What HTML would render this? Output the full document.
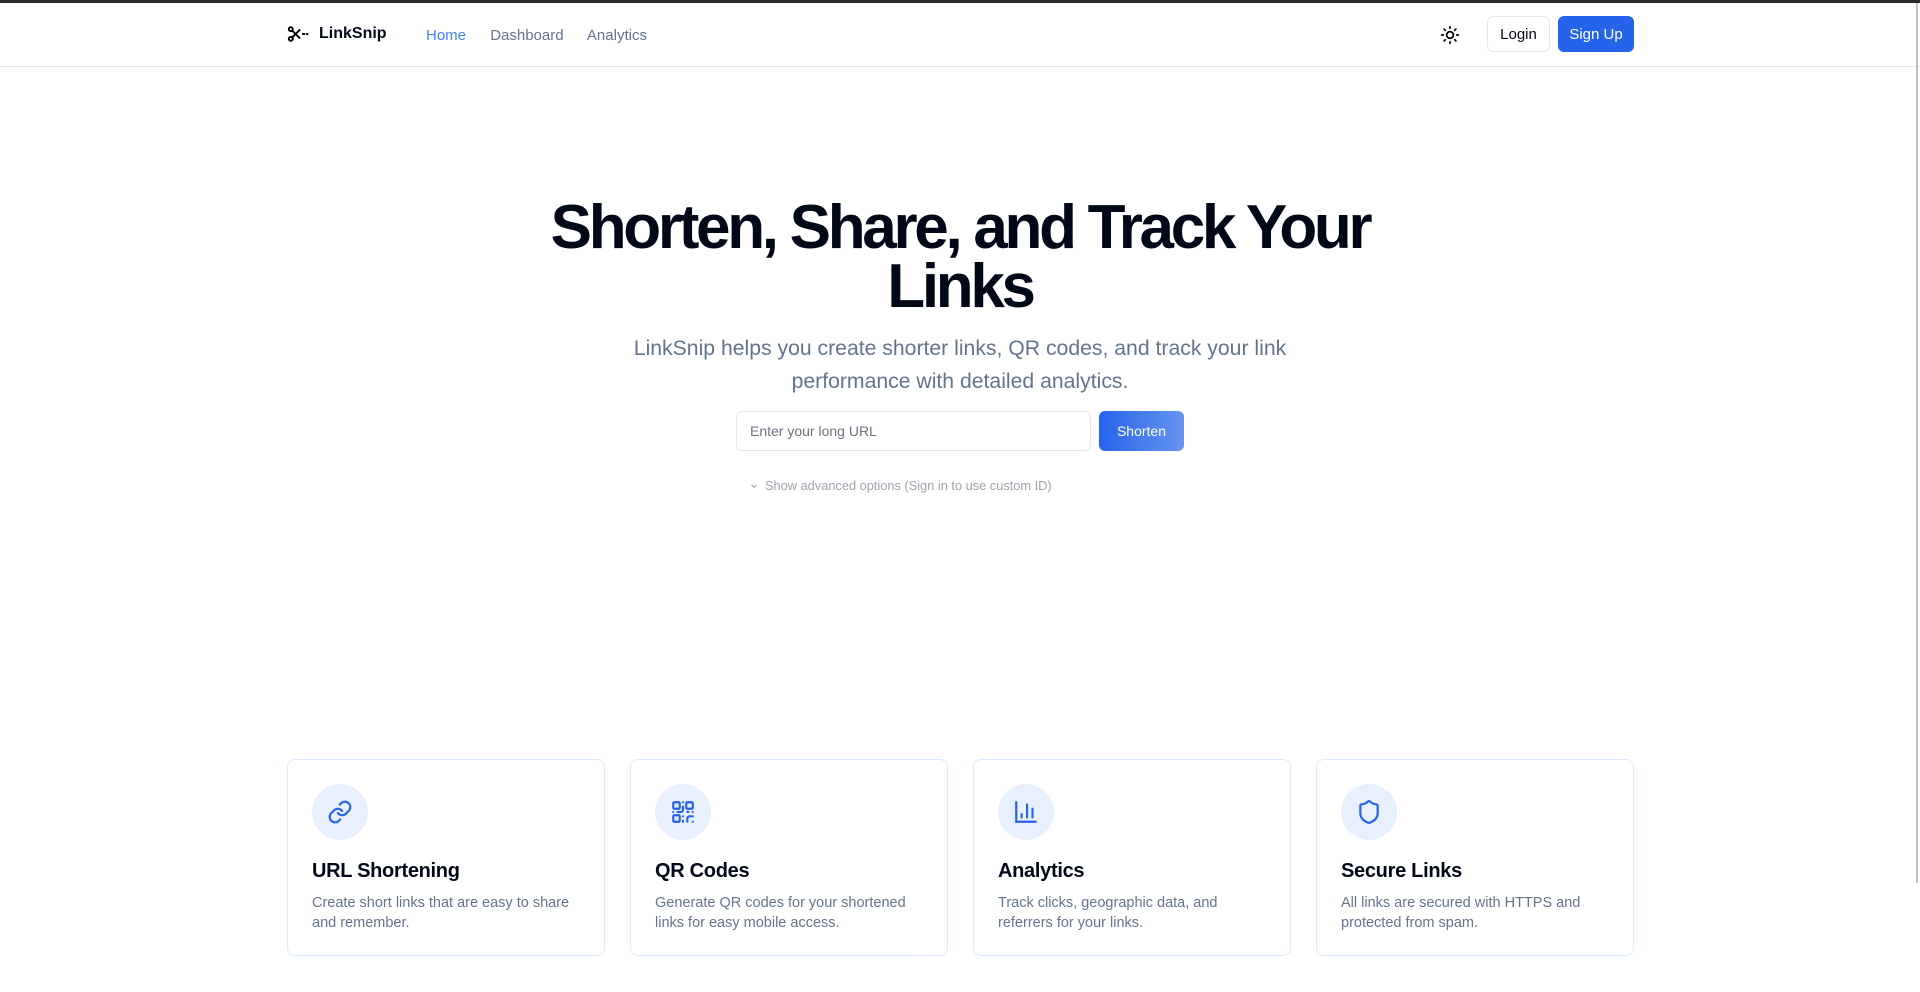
<!DOCTYPE html>
<html><head><meta charset="utf-8"><style>
*{box-sizing:border-box;margin:0;padding:0}
html,body{width:1920px;height:992px;overflow:hidden;background:#fff;font-family:"Liberation Sans",sans-serif;color:#020817}
.topbar{height:3px;background:#2b2b2b}
header{height:64px;border-bottom:1px solid #e2e8f0;position:relative}
.logo{position:absolute;left:287px;top:22px;display:flex;align-items:center;gap:10px;font-weight:bold;font-size:16px}
nav{position:absolute;left:426px;top:24px;font-size:15px;color:#64748b}
nav span{margin-right:20px}
nav .act{color:#3b82f6}
.sun{position:absolute;left:1440px;top:22px}
.login{position:absolute;left:1487px;top:13px;width:63px;height:36px;border:1px solid #e2e8f0;border-radius:6px;font-size:15px;display:flex;align-items:center;justify-content:center}
.signup{position:absolute;left:1558px;top:13px;width:76px;height:36px;background:#2563eb;color:#fff;border-radius:6px;font-size:15px;display:flex;align-items:center;justify-content:center}
h1{position:absolute;left:0;width:1920px;top:198px;text-align:center;font-size:62px;line-height:59px;font-weight:bold;letter-spacing:-3.3px;color:#020817}
.sub{position:absolute;left:0;width:1920px;top:332px;text-align:center;font-size:21.2px;line-height:33px;color:#64748b}
.input{position:absolute;left:736px;top:411px;width:355px;height:40px;border:1px solid #e2e8f0;border-radius:6px;font-size:14px;color:#6b7280;padding:0 13px;display:flex;align-items:center}
.btn{position:absolute;left:1099px;top:411px;width:85px;height:40px;border-radius:6px;background:linear-gradient(90deg,#2563eb,#6694f0);color:#fff;font-size:14px;display:flex;align-items:center;justify-content:center}
.adv{position:absolute;left:749px;top:478px;font-size:12.8px;color:#9ca3af;display:flex;align-items:center;gap:6px}
.card{position:absolute;top:759px;width:318px;height:197px;border:1px solid #dbeafe;border-radius:8px;padding:24px}
.ic{width:56px;height:56px;border-radius:50%;background:#e8effd;display:flex;align-items:center;justify-content:center}
.card h3{margin-top:17px;font-size:20px;line-height:28px;font-weight:bold;letter-spacing:-0.3px}
.card p{margin-top:8px;font-size:14.5px;line-height:20px;color:#64748b}
.sb{position:absolute;right:2px;top:3px;width:2px;height:880px;background:#c1c1c1}
</style></head><body>
<div class="topbar"></div>
<header>
<div class="logo"><svg width="22" height="16" viewBox="0 0 26 20" fill="none" stroke="#000" stroke-width="2.4" stroke-linecap="round"><circle cx="4" cy="4" r="2.5"/><circle cx="4" cy="16" r="2.5"/><path d="M6 6L15 15M6 14L15 5"/><path d="M19 10h2M24 10h1"/></svg><span>LinkSnip</span></div>
<nav><span class="act">Home</span> <span>Dashboard</span> <span>Analytics</span></nav>
<svg class="sun" width="20" height="20" viewBox="0 0 24 24" fill="none" stroke="#000" stroke-width="2" stroke-linecap="round"><circle cx="12" cy="12" r="4"/><path d="M12 2v2M12 20v2M4.9 4.9l1.4 1.4M17.7 17.7l1.4 1.4M2 12h2M20 12h2M4.9 19.1l1.4-1.4M17.7 6.3l1.4-1.4"/></svg>
<div class="login">Login</div>
<div class="signup">Sign Up</div>
</header>
<div class="sb"></div>
<h1>Shorten, Share, and Track Your<br>Links</h1>
<div class="sub">LinkSnip helps you create shorter links, QR codes, and track your link<br>performance with detailed analytics.</div>
<div class="input">Enter your long URL</div>
<div class="btn">Shorten</div>
<div class="adv"><svg width="10" height="10" viewBox="0 0 24 24" fill="none" stroke="#9ca3af" stroke-width="2.5"><path d="M6 9l6 6 6-6"/></svg>Show advanced options (Sign in to use custom ID)</div>

<div class="card" style="left:287px"><div class="ic"><svg width="26" height="26" viewBox="0 0 24 24" fill="none" stroke="#2563eb" stroke-width="2" stroke-linecap="round" stroke-linejoin="round"><path d="M10 13a5 5 0 0 0 7.5.5l3-3a5 5 0 0 0-7-7l-1.7 1.7"/><path d="M14 11a5 5 0 0 0-7.5-.5l-3 3a5 5 0 0 0 7 7l1.7-1.7"/></svg></div><h3>URL Shortening</h3><p>Create short links that are easy to share<br>and remember.</p></div>
<div class="card" style="left:630px"><div class="ic"><svg width="26" height="26" viewBox="0 0 24 24" fill="none" stroke="#2563eb" stroke-width="2" stroke-linecap="round"><rect x="3" y="3" width="6" height="6" rx="1"/><rect x="15" y="3" width="6" height="6" rx="1"/><rect x="3" y="15" width="6" height="6" rx="1"/><path d="M21 16h-3a2 2 0 0 0-2 2v3M21 21v.01M12 7v3a2 2 0 0 1-2 2H7M3 12h.01M12 3h.01M12 16v.01M16 12h1M21 12v.01M12 21v-1"/></svg></div><h3>QR Codes</h3><p>Generate QR codes for your shortened<br>links for easy mobile access.</p></div>
<div class="card" style="left:973px"><div class="ic"><svg width="26" height="26" viewBox="0 0 24 24" fill="none" stroke="#2563eb" stroke-width="2" stroke-linecap="round"><path d="M3 3v18h18M18 17V9M13 17V5M8 17v-3"/></svg></div><h3>Analytics</h3><p>Track clicks, geographic data, and<br>referrers for your links.</p></div>
<div class="card" style="left:1316px"><div class="ic"><svg width="26" height="26" viewBox="0 0 24 24" fill="none" stroke="#2563eb" stroke-width="2" stroke-linejoin="round"><path d="M20 13c0 5-3.5 7.5-7.7 9a1 1 0 0 1-.7 0C7.5 20.5 4 18 4 13V6a1 1 0 0 1 1-1c2 0 4.5-1.2 6.2-2.7a1.2 1.2 0 0 1 1.6 0C14.5 3.8 17 5 19 5a1 1 0 0 1 1 1z"/></svg></div><h3>Secure Links</h3><p>All links are secured with HTTPS and<br>protected from spam.</p></div>
</body></html>
